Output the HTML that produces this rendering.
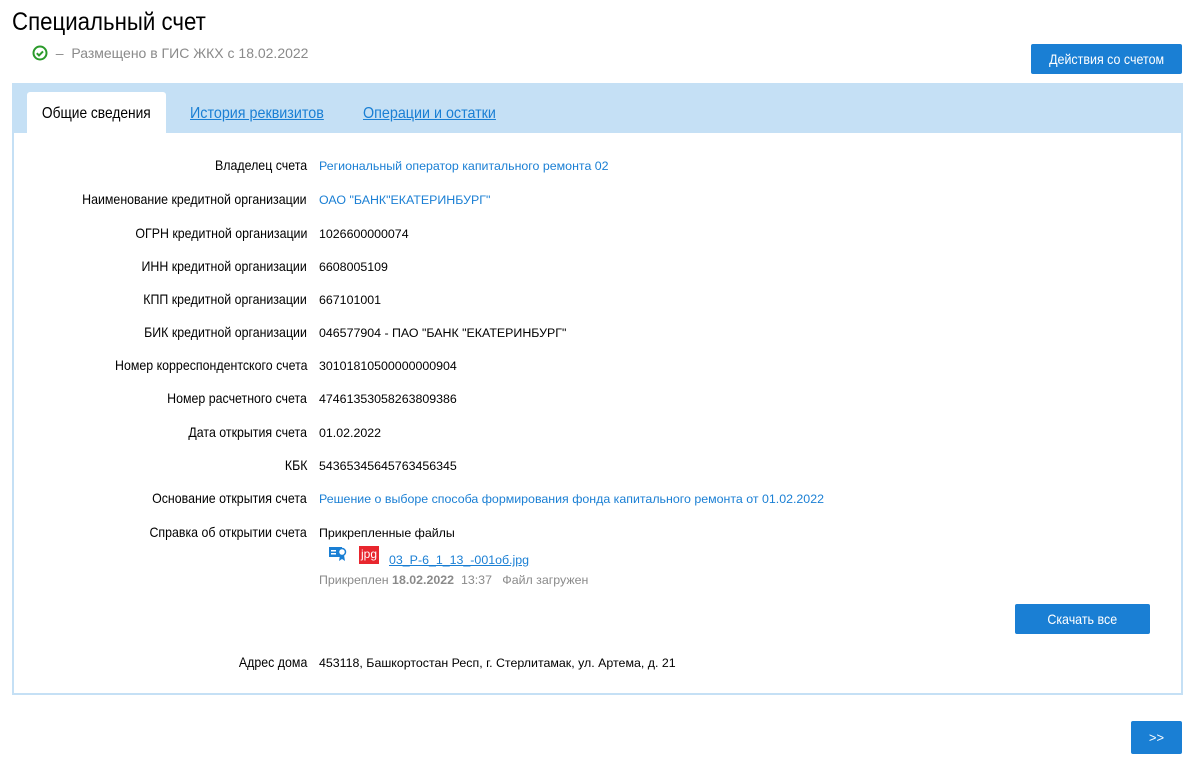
<!DOCTYPE html>
<html><head><meta charset="utf-8"><style>
*{margin:0;padding:0;box-sizing:border-box}
body{width:1194px;height:768px;background:#fff;font-family:"Liberation Sans",sans-serif;color:#000;position:relative;overflow:hidden}
.a{position:absolute;white-space:nowrap}
h1{position:absolute;left:12px;top:8px;font-size:25px;font-weight:normal;transform:scaleX(.89);transform-origin:left;white-space:nowrap}
.status{left:32px;top:45px;font-size:14px;color:#8a8a8a}
.btn{position:absolute;background:#1a7fd4;color:#fff;font-size:14px;text-align:center;border-radius:2px}
.btn span{display:inline-block;transform:scaleX(.89)}
.card{position:absolute;left:12px;top:83px;width:1171px;height:612px;border:2px solid #c5e0f5}
.hdr{position:absolute;left:0;top:0;width:100%;height:48px;background:#c5e0f5}
.tab{position:absolute;top:7px;left:13px;width:139px;height:43px;background:#fff;border-radius:3px 3px 0 0;font-size:16px;text-align:center;line-height:44px}
.tab span{display:inline-block;transform:scaleX(.86)}
.tl{position:absolute;top:20px;font-size:16px;color:#1a7fd4;text-decoration:underline;transform:scaleX(.895);transform-origin:left;white-space:nowrap}
.lbl{position:absolute;right:887px;font-size:14px;text-align:right;white-space:nowrap;transform:scaleX(.885);transform-origin:right}
.val{position:absolute;left:319px;font-size:12.4px;white-space:nowrap}
.lnk{color:#1a7fd4}
</style></head><body>
<h1>Специальный счет</h1>
<div class="a status"><svg width="16" height="16" viewBox="0 0 16 16" style="vertical-align:-3px"><circle cx="8" cy="8" r="6.5" fill="none" stroke="#2a9a2a" stroke-width="2"/><path d="M4.8 8.2l2.2 2.2 4-4" fill="none" stroke="#2a9a2a" stroke-width="2"/></svg>&nbsp; –&nbsp; Размещено в ГИС ЖКХ с 18.02.2022</div>
<div class="btn" style="left:1031px;top:44px;width:151px;height:30px;line-height:30px"><span>Действия со счетом</span></div>
<div class="card">
<div class="hdr"></div>
<div class="tab"><span>Общие сведения</span></div>
<div class="tl" style="left:176px">История реквизитов</div>
<div class="tl" style="left:349px">Операции и остатки</div>
</div>
<div class="lbl" style="top:157px">Владелец счета</div><div class="val lnk" style="top:159px">Региональный оператор капитального ремонта 02</div>
<div class="lbl" style="top:191px">Наименование кредитной организации</div><div class="val lnk" style="top:193px">ОАО "БАНК"ЕКАТЕРИНБУРГ"</div>
<div class="lbl" style="top:225px">ОГРН кредитной организации</div><div class="val" style="top:227px">1026600000074</div>
<div class="lbl" style="top:258px">ИНН кредитной организации</div><div class="val" style="top:260px">6608005109</div>
<div class="lbl" style="top:291px">КПП кредитной организации</div><div class="val" style="top:293px">667101001</div>
<div class="lbl" style="top:324px">БИК кредитной организации</div><div class="val" style="top:326px">046577904 - ПАО "БАНК "ЕКАТЕРИНБУРГ"</div>
<div class="lbl" style="top:357px">Номер корреспондентского счета</div><div class="val" style="top:359px">30101810500000000904</div>
<div class="lbl" style="top:390px">Номер расчетного счета</div><div class="val" style="top:392px">47461353058263809386</div>
<div class="lbl" style="top:424px">Дата открытия счета</div><div class="val" style="top:426px">01.02.2022</div>
<div class="lbl" style="top:457px">КБК</div><div class="val" style="top:459px">54365345645763456345</div>
<div class="lbl" style="top:490px">Основание открытия счета</div><div class="val lnk" style="top:492px">Решение о выборе способа формирования фонда капитального ремонта от 01.02.2022</div>
<div class="lbl" style="top:524px">Справка об открытии счета</div><div class="val" style="top:526px">Прикрепленные файлы</div>
<svg class="a" style="left:329px;top:546px" width="18" height="16" viewBox="0 0 18 16"><rect x="0" y="1" width="13" height="10" fill="#1a7fd4"/><rect x="2" y="4" width="5" height="1.5" fill="#fff"/><rect x="2" y="7" width="5" height="1.5" fill="#fff"/><circle cx="13" cy="6" r="3.5" fill="#fff" stroke="#1a7fd4" stroke-width="1.5"/><path d="M11 9l-1 6 3-2 3 2-1-6" fill="#1a7fd4"/></svg>
<div class="a" style="left:359px;top:546px;width:20px;height:18px;background:#e8262e;color:#fff;font-size:12px;text-align:center;line-height:16px">jpg</div>
<div class="val lnk" style="left:389px;top:553px;text-decoration:underline">03_Р-6_1_13_-001об.jpg</div>
<div class="val" style="top:573px;color:#8a8a8a">Прикреплен <b>18.02.2022</b>&nbsp; 13:37&nbsp;&nbsp; Файл загружен</div>
<div class="btn" style="left:1015px;top:604px;width:135px;height:30px;line-height:30px"><span>Скачать все</span></div>
<div class="lbl" style="top:654px">Адрес дома</div><div class="val" style="top:656px">453118, Башкортостан Респ, г. Стерлитамак, ул. Артема, д. 21</div>
<div class="btn" style="left:1131px;top:721px;width:51px;height:33px;line-height:33px;font-size:13px">&gt;&gt;</div>
</body></html>
